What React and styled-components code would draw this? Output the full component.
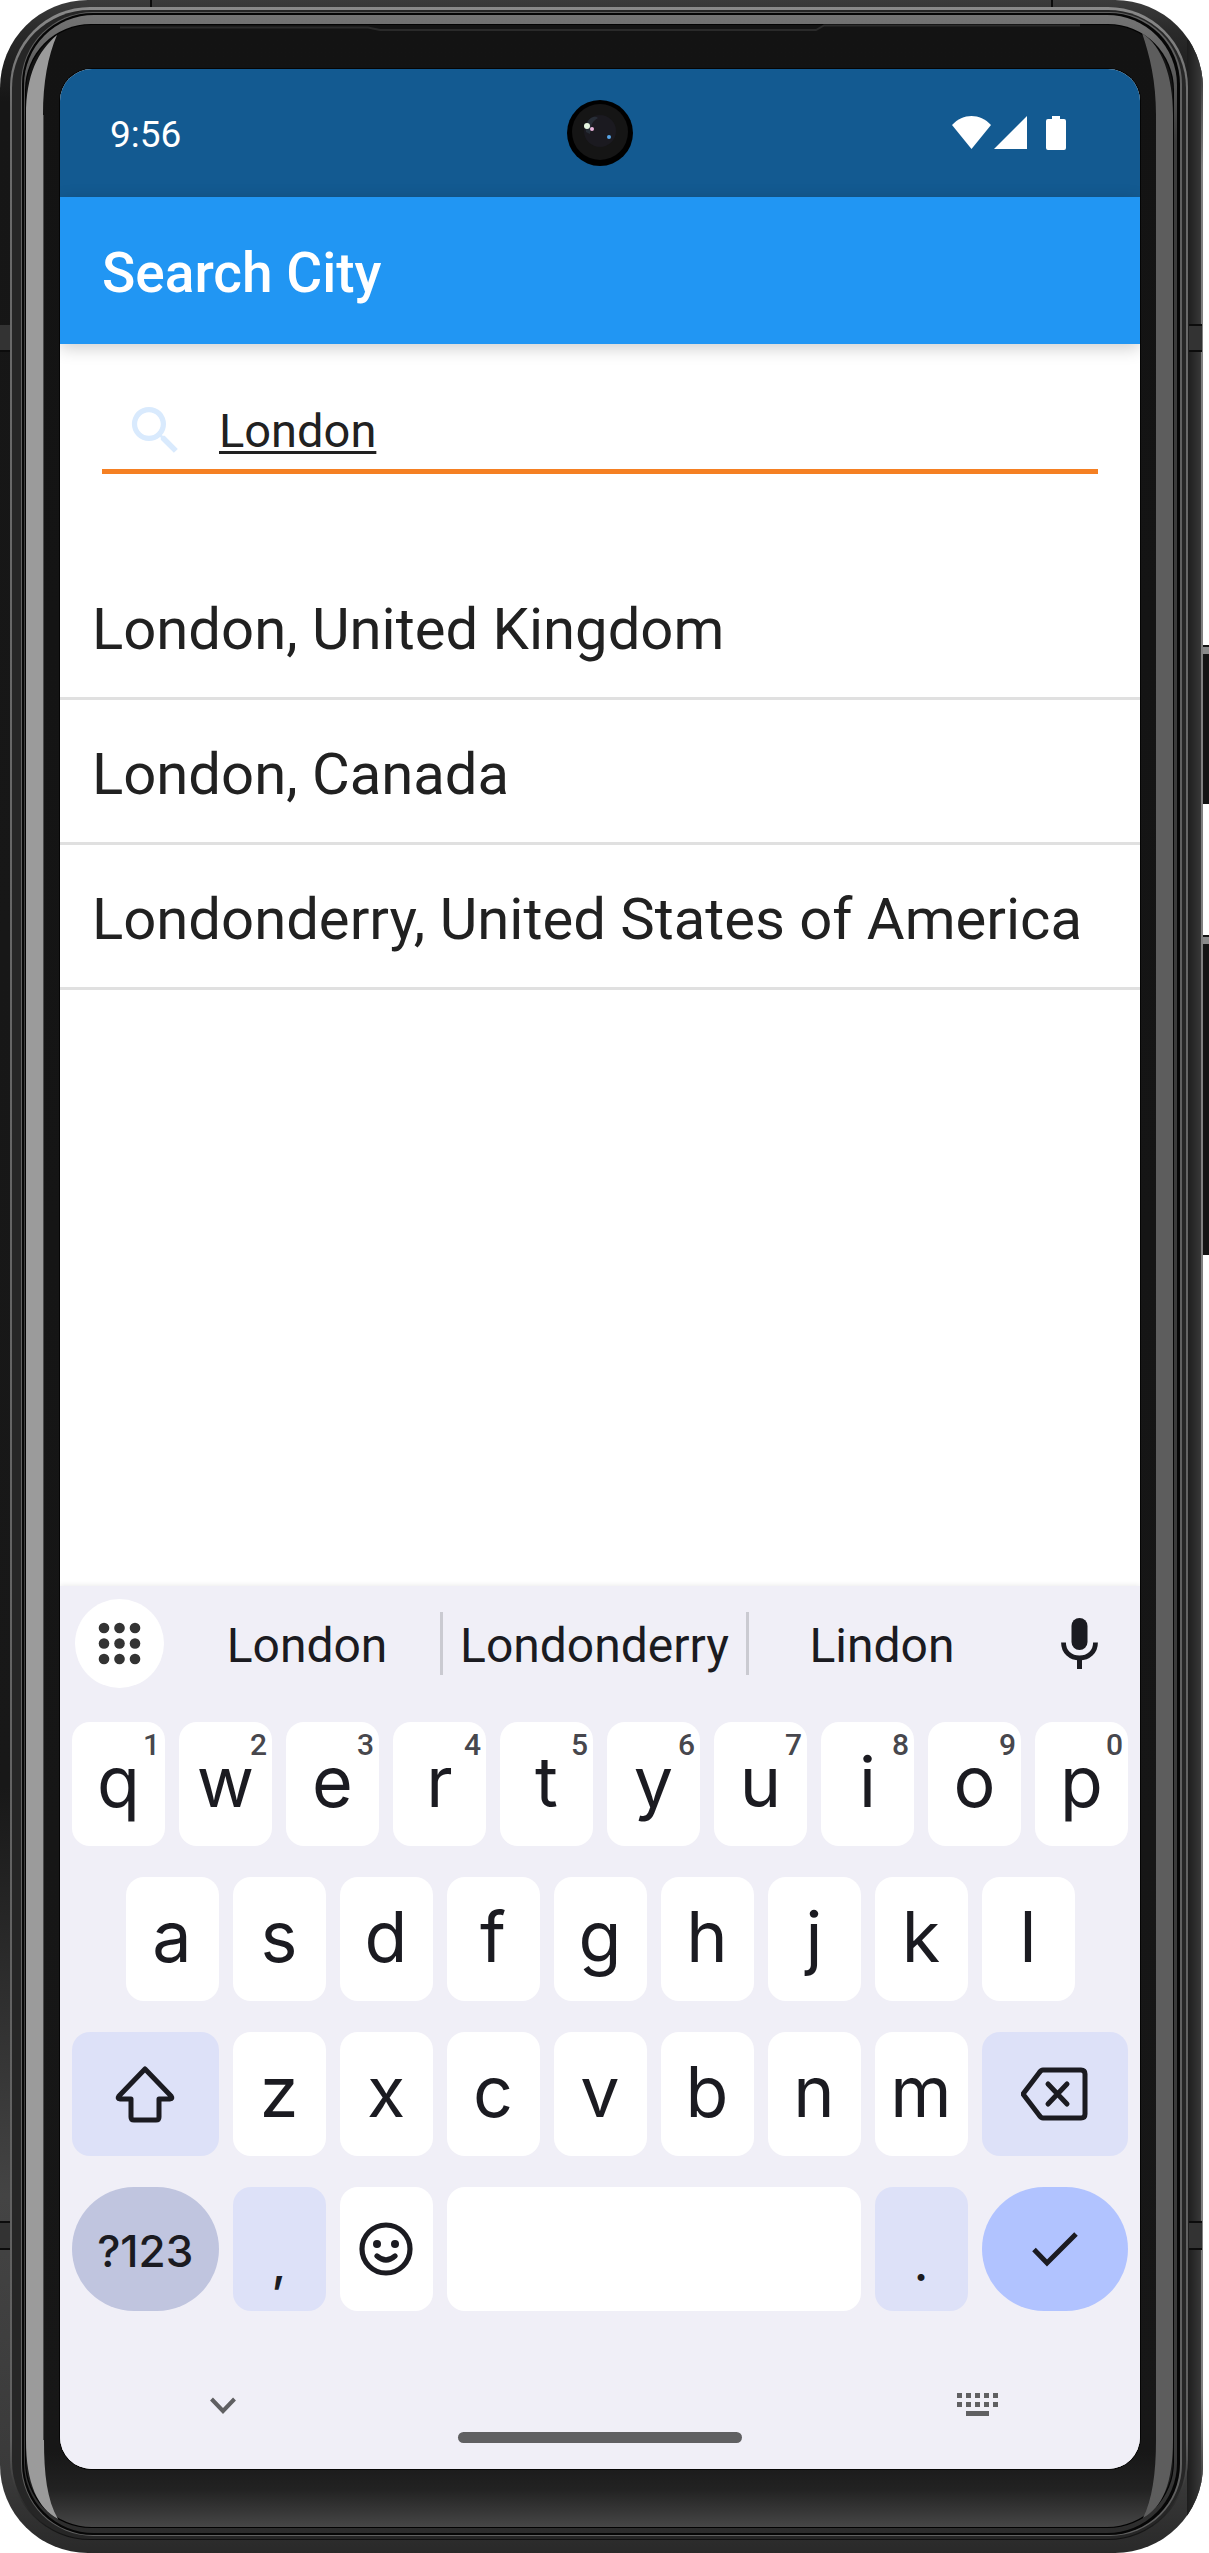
import React, { useState } from "react";
import styled, { createGlobalStyle } from "styled-components";

const GlobalStyle = createGlobalStyle`
  *, *::before, *::after { box-sizing: border-box; }
  body { margin: 0; background: #ffffff; }
  button, input { font: inherit; color: inherit; border: 0; margin: 0; padding: 0; background: none; border-radius: 0; }
  button { cursor: pointer; }
  svg { display: block; }
`;

const Phone = styled.div`
  position: relative;
  display: flex;
  flex-direction: column;
  min-height: 100vh;
  padding: 69px 69px 84px 60px;
  font-family: Roboto, "Liberation Sans", sans-serif;
  color: #212121;
`;

const Bezel = styled.svg`
  position: absolute;
  inset: 0;
  width: 100%;
  height: 100%;
`;

const Screen = styled.div`
  position: relative;
  flex: 1;
  display: flex;
  flex-direction: column;
  overflow: hidden;
  border-radius: 32px;
  background: #ffffff;
`;

const StatusBar = styled.header`
  display: flex;
  align-items: center;
  justify-content: space-between;
  height: 128px;
  padding: 0 74px 0 50px;
  background: #135a91;
  color: #ffffff;
`;

const Clock = styled.time`
  padding-top: 4px;
  font-size: 37px;
  line-height: 44px;
`;

const StatusIcons = styled.div`
  display: flex;
  align-items: center;
`;

const Camera = styled.svg`
  position: absolute;
  top: 31px;
  left: calc(50% - 33px);
  width: 66px;
  height: 66px;
`;

const AppBar = styled.div`
  position: relative;
  display: flex;
  align-items: center;
  height: 147px;
  padding: 4px 42px 0;
  background: #2196f3;
  color: #ffffff;
  box-shadow: 0 4px 16px rgba(0, 0, 0, 0.2);
`;

const Title = styled.h1`
  margin: 0;
  font-size: 55px;
  font-weight: 500;
  line-height: 64px;
`;

const Content = styled.main`
  flex: 1;
  display: flex;
  flex-direction: column;
`;

const SearchField = styled.label`
  display: flex;
  align-items: center;
  gap: 32px;
  height: 82px;
  margin: 48px 42px 81px;
  padding-left: 22px;
  border-bottom: 5px solid #f58023;
`;

const SearchInput = styled.input`
  flex: 1;
  min-width: 0;
  height: 64px;
  font-size: 47px;
  text-decoration: underline;
  text-decoration-thickness: 3px;
  text-underline-offset: 4px;
  outline: none;
`;

const Results = styled.ul`
  flex: 1;
  margin: 0;
  padding: 0;
  list-style: none;
`;

const Result = styled.button`
  display: flex;
  align-items: center;
  width: 100%;
  height: 145px;
  padding: 6px 32px 0;
  border-bottom: 3px solid #e0e0e0;
  font-size: 58px;
  line-height: 68px;
  text-align: left;
  white-space: nowrap;
`;

const Keyboard = styled.section`
  display: flex;
  flex-direction: column;
  background: #f0eff7;
  box-shadow: 0 -1px 5px rgba(0, 0, 0, 0.08);
  color: #1b1b21;
  font-family: Inter, Roboto, sans-serif;
`;

const Strip = styled.div`
  display: flex;
  align-items: center;
  height: 136px;
  padding: 0 16px 22px 15px;
`;

const RoundButton = styled.button`
  display: grid;
  place-items: center;
  flex: none;
  width: 89px;
  height: 89px;
  border-radius: 50%;
  background: ${(p) => (p.$plain ? "transparent" : "#ffffff")};
`;

const Suggestions = styled.div`
  flex: 1;
  display: grid;
  grid-template-columns: 1fr 309px 1fr;
  align-items: center;
  padding: 0 20px 0 10px;
`;

const Suggestion = styled.button`
  height: 63px;
  padding-top: 6px;
  border: solid #cacad1;
  border-width: ${(p) => (p.$middle ? "0 3px" : "0")};
  font-family: Roboto, sans-serif;
  font-size: 48px;
  line-height: 56px;
`;

const Keys = styled.div`
  display: grid;
  grid-template-columns: repeat(20, minmax(0, 1fr));
  grid-auto-rows: 124px;
  gap: 31px 14px;
  padding: 0 12px;
`;

const tones = {
  letter: "#ffffff",
  soft: "#dde1f8",
  symbols: "#c0c5df",
  enter: "#b1c3ff",
};

const KeyCap = styled.button`
  position: relative;
  display: grid;
  place-items: center;
  grid-column: ${(p) => (p.$start ? `${p.$start} / span ${p.$span}` : `span ${p.$span}`)};
  border-radius: ${(p) => (p.$round ? "62px" : "18px")};
  background: ${(p) => tones[p.$tone]};
`;

const Letter = styled.span`
  padding-bottom: 4px;
  font-size: 70px;
  line-height: 84px;
`;

const SymbolsLabel = styled.span`
  padding-top: 4px;
  font-size: 44px;
  font-weight: 500;
  line-height: 52px;
`;

const Mark = styled.span`
  padding-top: 30px;
  font-size: 48px;
  font-weight: 500;
  line-height: 58px;
`;

const Hint = styled.sup`
  position: absolute;
  top: 7px;
  right: 5px;
  color: #47474d;
  font-family: Roboto, sans-serif;
  font-size: 30px;
  font-weight: 500;
  line-height: 32px;
`;

const NavBar = styled.div`
  display: grid;
  grid-template-columns: 1fr 284px 1fr;
  align-items: center;
  height: 158px;
  padding: 30px 142px 0;
`;

const NavButton = styled.button`
  justify-self: ${(p) => p.$side};
  padding-left: 8px;
`;

const HomeBar = styled.div`
  align-self: end;
  height: 11px;
  margin-bottom: 26px;
  border-radius: 6px;
  background: #606062;
`;

const row1 = "qwertyuiop".split("");
const row2 = "asdfghjkl".split("");
const row3 = "zxcvbnm".split("");
const cities = ["London, United Kingdom", "London, Canada", "Londonderry, United States of America"];

function LetterKey({ letter, hint, start }) {
  return (
    <KeyCap type="button" $tone="letter" $span={2} $start={start}>
      <Letter>{letter}</Letter>
      {hint && <Hint>{hint}</Hint>}
    </KeyCap>
  );
}

function PhoneBezel() {
  return (
    <Bezel viewBox="0 0 1209 2553" preserveAspectRatio="none" aria-hidden="true">
      <defs>
        <linearGradient id="shell" x1="0" y1="0" x2="0" y2="1">
          <stop offset="0" stopColor="#3c3c3c" />
          <stop offset="0.012" stopColor="#2a2a2a" />
          <stop offset="0.04" stopColor="#161616" />
          <stop offset="0.7" stopColor="#181818" />
          <stop offset="0.86" stopColor="#444444" />
          <stop offset="0.97" stopColor="#3a3a3a" />
          <stop offset="1" stopColor="#292929" />
        </linearGradient>
        <linearGradient id="edge" x1="0" y1="0" x2="0" y2="1">
          <stop offset="0" stopColor="#8a8a8a" />
          <stop offset="0.04" stopColor="#6a6a6a" />
          <stop offset="0.96" stopColor="#606060" />
          <stop offset="1" stopColor="#101010" />
        </linearGradient>
        <linearGradient id="rim" x1="0" y1="0" x2="0" y2="1">
          <stop offset="0" stopColor="#747474" />
          <stop offset="0.012" stopColor="#686868" />
          <stop offset="0.05" stopColor="#3a3a3a" />
          <stop offset="0.97" stopColor="#3a3a3a" />
          <stop offset="1" stopColor="#2c2c2c" />
        </linearGradient>
        <linearGradient id="glass" x1="0" y1="0" x2="0" y2="1">
          <stop offset="0" stopColor="#131313" />
          <stop offset="0.97" stopColor="#171717" />
          <stop offset="0.985" stopColor="#222222" />
          <stop offset="1" stopColor="#464646" />
        </linearGradient>
        <linearGradient id="rightShell" x1="0" y1="0" x2="1" y2="0">
          <stop offset="0" stopColor="#1c1c1c" />
          <stop offset="1" stopColor="#3c3c3c" />
        </linearGradient>
        <linearGradient id="rightEdge" x1="0" y1="0" x2="0" y2="1">
          <stop offset="0" stopColor="#808080" stopOpacity="0" />
          <stop offset="0.04" stopColor="#808080" />
          <stop offset="0.96" stopColor="#808080" />
          <stop offset="1" stopColor="#808080" stopOpacity="0" />
        </linearGradient>
        <clipPath id="body">
          <rect width="1203" height="2553" rx="88" />
        </clipPath>
      </defs>
      <rect x="1199" y="645" width="14" height="159" rx="3" fill="#141414" />
      <rect x="1202" y="647" width="7" height="7" fill="#8a8a8a" />
      <rect x="1199" y="935" width="14" height="320" rx="3" fill="#141414" />
      <rect x="1202" y="937" width="7" height="7" fill="#8a8a8a" />
      <rect width="1203" height="2553" rx="88" fill="url(#shell)" />
      <g clipPath="url(#body)">
        <rect x="1187" y="40" width="16" height="2480" fill="url(#rightShell)" />
        <rect x="1201" y="70" width="2" height="2420" fill="url(#rightEdge)" />
      </g>
      <path d="M0 325h11v26H0zM1189 325h13v26h-13zM0 2222h10v27H0zM1189 2222h13v27h-13z" fill="#333333" />
      <path d="M0 351h11M1189 325h13M1189 351h13M0 2222h10M0 2249h10M1189 2222h13M1189 2249h13M151 0v9M1052 0v10" stroke="#0c0c0c" strokeWidth="2" />
      <rect x="10" y="7" width="1178" height="2533" rx="80" fill="url(#edge)" />
      <rect x="12" y="10" width="1174" height="2529" rx="78" fill="#262626" />
      <rect x="21" y="12" width="1161" height="2524" rx="72" fill="#606060" />
      <rect x="22" y="13" width="1158" height="2522" rx="71" fill="#060606" />
      <rect x="24" y="15" width="1153" height="2518" rx="70" fill="url(#rim)" />
      <rect x="25" y="24" width="1149" height="2504" rx="66" fill="#030303" />
      <rect x="26" y="25" width="1147" height="2502" rx="66" fill="url(#glass)" />
      <path d="M57 35C38 51 26 75 26 115V2440C26 2484 38 2508 58 2519C47 2500 44 2474 44 2440L43 115C43 82 48 56 57 35Z" fill="#9b9b9b" />
      <path d="M43.500 115V2440" stroke="#4a4a4a" />
      <path d="M1142 33C1162 46 1173 76 1173 115V2440C1173 2484 1162 2508 1143 2518C1152 2500 1156 2474 1156 2440V115C1156 82 1150 56 1142 33Z" fill="#5d5d5d" />
      <path d="M120 27.500H368L380 30H816L824 25.500H1080" fill="none" stroke="#2a2a2a" strokeWidth="2" />
      <rect x="59" y="68" width="1082" height="2402" rx="33" fill="#050505" />
    </Bezel>
  );
}

export default function App() {
  const [query, setQuery] = useState("London");
  return (
    <>
      <GlobalStyle />
      <Phone>
        <PhoneBezel />
        <Screen>
          <StatusBar>
            <Clock>9:56</Clock>
            <StatusIcons>
              <svg width="114" height="36" viewBox="0 0 114 36" fill="#fff" role="img" aria-label="Wi-Fi, signal and battery">
                <path d="M0 10C11-2 28-2 39 10L19.500 34Z" />
                <path d="M75 1V34H42Z" />
                <path d="M100 1h8v3h4q2 0 2 2v27q0 2-2 2h-16q-2 0-2-2V6q0-2 2-2h4z" />
              </svg>
            </StatusIcons>
            <Camera viewBox="0 0 66 66" aria-hidden="true">
              <circle cx="33" cy="33" r="33" fill="#000" />
              <circle cx="33" cy="32" r="28" fill="#151515" />
              <circle cx="33" cy="31" r="16" fill="#1b1a20" />
              <path d="M19 32C17 20 27 14 31 18C23 22 24 29 23 34Z" fill="#33404c" opacity="0.5" />
              <circle cx="20" cy="26" r="3" fill="#e6f5e0" />
              <circle cx="25" cy="29" r="2" fill="#e9b5dc" />
              <circle cx="42" cy="37" r="2" fill="#58a6e8" />
            </Camera>
          </StatusBar>
          <AppBar>
            <Title>Search City</Title>
          </AppBar>
          <Content>
            <SearchField>
              <svg width="63" height="63" viewBox="0 0 24 24" fill="#d9eafd" aria-hidden="true">
                <path d="M15.500 14h-.79l-.28-.27A6.470 6.470 0 0 0 16 9.500 6.500 6.500 0 1 0 9.500 16c1.610 0 3.090-.59 4.230-1.570l.27.28v.79l5 4.990L20.490 19l-4.990-5zm-6 0C7.010 14 5 11.990 5 9.500S7.010 5 9.500 5 14 7.010 14 9.500 11.990 14 9.500 14z" />
              </svg>
              <SearchInput aria-label="Search city" value={query} onChange={(e) => setQuery(e.target.value)} />
            </SearchField>
            <Results>
              {cities.map((city) => (
                <li key={city}>
                  <Result type="button">{city}</Result>
                </li>
              ))}
            </Results>
          </Content>
          <Keyboard aria-label="Keyboard">
            <Strip>
              <RoundButton type="button" aria-label="Keyboard menu">
                <svg width="43" height="43" viewBox="0 0 43 43" fill="#333333">
                  {[6, 21.500, 37].map((y) => [6, 21.500, 37].map((x) => <circle key={`${x}-${y}`} cx={x} cy={y} r="5.300" />))}
                </svg>
              </RoundButton>
              <Suggestions>
                <Suggestion type="button">London</Suggestion>
                <Suggestion type="button" $middle>Londonderry</Suggestion>
                <Suggestion type="button">Lindon</Suggestion>
              </Suggestions>
              <RoundButton type="button" $plain aria-label="Voice input">
                <svg width="37" height="51" viewBox="0 0 37 51" fill="#1b1b21">
                  <rect x="10.500" y="0" width="16" height="32" rx="8" />
                  <path d="M2.500 24.500C2.500 34 9.500 40 18.500 40S34.500 34 34.500 24.500" fill="none" stroke="#1b1b21" strokeWidth="4.800" />
                  <rect x="16" y="39" width="5" height="12" />
                </svg>
              </RoundButton>
            </Strip>
            <Keys>
              {row1.map((l, i) => (
                <LetterKey key={l} letter={l} hint={String((i + 1) % 10)} />
              ))}
              {row2.map((l, i) => (
                <LetterKey key={l} letter={l} start={i === 0 ? 2 : undefined} />
              ))}
              <KeyCap type="button" $tone="soft" $start={1} $span={3} aria-label="Shift">
                <svg width="60" height="58" viewBox="0 0 60 58" fill="none" stroke="#1b1b21" strokeWidth="5" strokeLinejoin="round">
                  <path d="M30 4L56 31q2 3-1 3H44V52q0 3-3 3H19q-3 0-3-3V34H5q-3 0-1-3Z" />
                </svg>
              </KeyCap>
              {row3.map((l) => (
                <LetterKey key={l} letter={l} />
              ))}
              <KeyCap type="button" $tone="soft" $span={3} aria-label="Delete">
                <svg width="68" height="54" viewBox="0 0 68 54" fill="none" stroke="#1b1b21" strokeWidth="5" strokeLinejoin="round" strokeLinecap="round">
                  <path d="M22 3H60q4 0 4 4V47q0 4-4 4H22q-2 0-4-3L2 27L18 6q2-3 4-3Z" />
                  <path d="M27 17L46 37M46 17L27 37" />
                </svg>
              </KeyCap>
              <KeyCap type="button" $tone="symbols" $span={3} $round>
                <SymbolsLabel>?123</SymbolsLabel>
              </KeyCap>
              <KeyCap type="button" $tone="soft" $span={2}>
                <Mark>,</Mark>
              </KeyCap>
              <KeyCap type="button" $tone="letter" $span={2} aria-label="Emoji">
                <svg width="54" height="54" viewBox="0 0 54 54" fill="none" stroke="#1b1b21" strokeWidth="5.200" strokeLinecap="round">
                  <circle cx="27" cy="27" r="24" />
                  <path d="M18 34Q27 42 36 34" />
                  <circle cx="18" cy="22" r="4" fill="#1b1b21" stroke="none" />
                  <circle cx="36" cy="22" r="4" fill="#1b1b21" stroke="none" />
                </svg>
              </KeyCap>
              <KeyCap type="button" $tone="letter" $span={8} aria-label="Space" />
              <KeyCap type="button" $tone="soft" $span={2}>
                <Mark>.</Mark>
              </KeyCap>
              <KeyCap type="button" $tone="enter" $span={3} $round aria-label="Done">
                <svg width="46" height="36" viewBox="0 0 46 36" fill="none" stroke="#1b1b21" strokeWidth="5">
                  <path d="M2 18.500L15 32L44 3" />
                </svg>
              </KeyCap>
            </Keys>
            <NavBar>
              <NavButton type="button" $side="start" aria-label="Hide keyboard">
                <svg width="26" height="17" viewBox="0 0 26 17" fill="none" stroke="#606062" strokeWidth="4">
                  <path d="M1.500 2L13 14L24.500 2" />
                </svg>
              </NavButton>
              <HomeBar />
              <NavButton type="button" $side="end" aria-label="Switch keyboard">
                <svg width="41" height="24" viewBox="0 0 41 24" fill="#606062">
                  {[0, 9].map((y) => [0, 9, 18, 27, 36].map((x) => <rect key={`${x}-${y}`} x={x} y={y} width="5" height="5" />))}
                  <rect x="9" y="18" width="23" height="5" />
                </svg>
              </NavButton>
            </NavBar>
          </Keyboard>
        </Screen>
      </Phone>
    </>
  );
}
